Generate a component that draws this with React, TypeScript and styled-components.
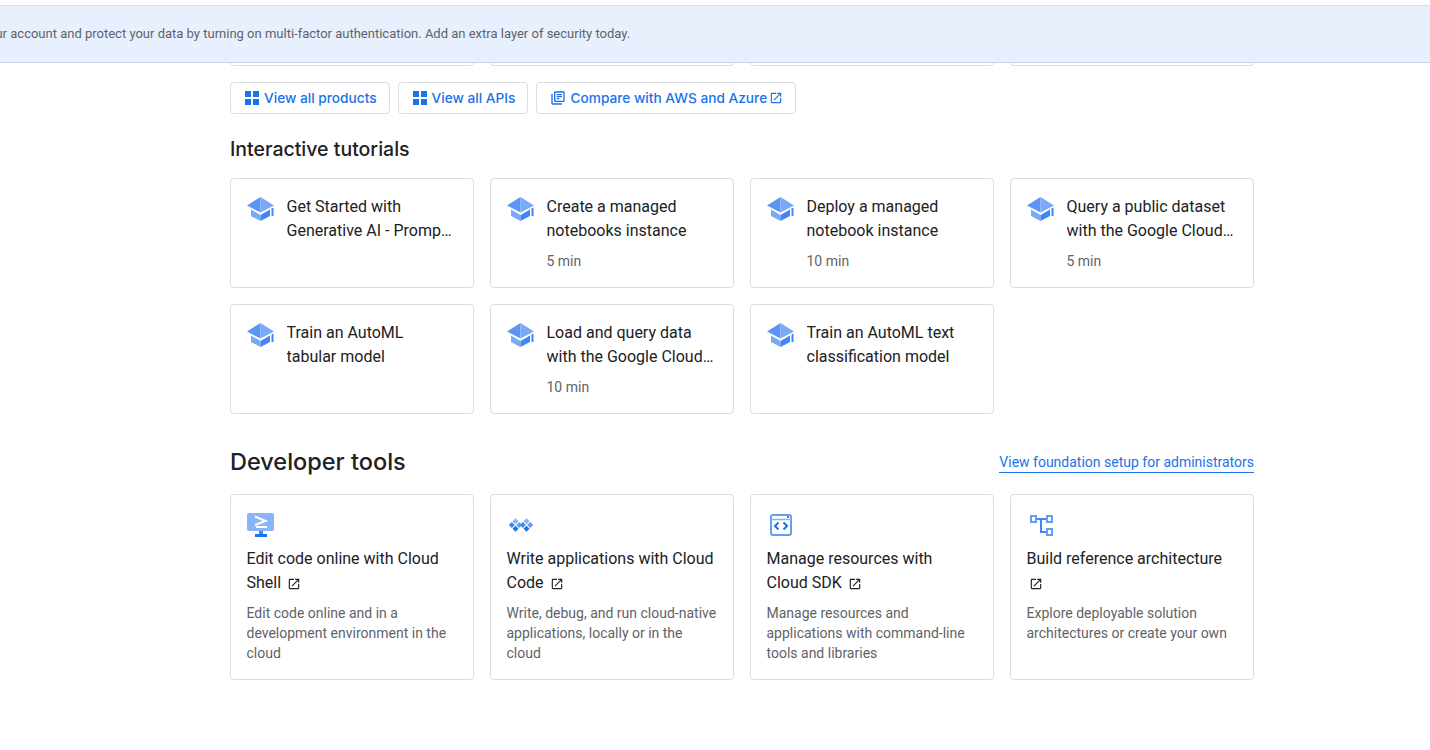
import styled, { createGlobalStyle } from 'styled-components'

const GlobalStyle = createGlobalStyle`
  html, body {
    margin: 0;
    padding: 0;
    background: #fff;
    font-family: Roboto, "Liberation Sans", sans-serif;
    color: #202124;
  }
`

const Page = styled.div`
  position: relative;
  height: 750px;
  overflow: hidden;
`

const Banner = styled.div`
  position: absolute;
  top: 5px;
  left: 0;
  right: 0;
  height: 58px;
  box-sizing: border-box;
  display: flex;
  align-items: center;
  background: #e8f0fe;
  border-top: 1px solid #dadce0;
  border-bottom: 1px solid #c9d3e6;
  overflow: hidden;
`

const BannerText = styled.span`
  margin-left: -61px;
  font-size: 13px;
  line-height: 16px;
  white-space: nowrap;
  color: #5f6368;
`

const Content = styled.main`
  width: 1024px;
  margin-left: 230px;
`

const PeekRow = styled.div`
  display: grid;
  grid-template-columns: repeat(4, 244px);
  gap: 16px;
  height: 56px;
  padding-top: 10px;
`

const PeekCard = styled.div`
  border: 1px solid #dadce0;
  border-radius: 4px;
`

const Buttons = styled.div`
  display: flex;
  gap: 8px;
  margin-top: 16px;
`

const LinkButton = styled.a`
  display: flex;
  align-items: center;
  height: 32px;
  box-sizing: border-box;
  padding: 0 12px 0 13px;
  gap: 4px;
  border: 1px solid #dadce0;
  border-radius: 4px;
  font-family: Inter, Roboto, sans-serif;
  font-size: 13.7px;
  font-weight: 500;
  color: #1a73e8;
  white-space: nowrap;
`

const SectionTitle = styled.h2`
  margin: 21px 0 15px;
  font-family: Inter, Roboto, sans-serif;
  font-size: 19.5px;
  line-height: 28px;
  font-weight: 500;
  color: #202124;
`

const SectionHead = styled.div`
  display: flex;
  align-items: center;
  justify-content: space-between;
  margin: 32px 0 16px;
`

const BigTitle = styled.h2`
  margin: 0;
  font-family: Inter, Roboto, sans-serif;
  font-size: 23.5px;
  line-height: 32px;
  font-weight: 500;
  color: #202124;
`

const TextLink = styled.a`
  font-size: 14px;
  line-height: 20px;
  color: #1a73e8;
  border-bottom: 1px solid #1a73e8;
`

const Grid = styled.div`
  display: grid;
  grid-template-columns: repeat(4, 244px);
  gap: 16px;
`

const TutorialCard = styled.div`
  display: flex;
  gap: 12.5px;
  height: 110px;
  box-sizing: border-box;
  padding: 16px 17px 16px 15.5px;
  border: 1px solid #dadce0;
  border-radius: 4px;
`

const TutorialBody = styled.div`
  min-width: 0;
`

const CardTitle = styled.div`
  font-size: 16px;
  line-height: 24px;
  color: #202124;
`

const ClampTitle = styled(CardTitle)`
  display: -webkit-box;
  -webkit-box-orient: vertical;
  -webkit-line-clamp: 2;
  overflow: hidden;
`

const Duration = styled.div`
  margin-top: 8px;
  font-size: 14px;
  line-height: 20px;
  color: #5f6368;
`

const ToolCard = styled.div`
  height: 186px;
  box-sizing: border-box;
  padding: 16px 16px 16px 15.5px;
  border: 1px solid #dadce0;
  border-radius: 4px;
`

const ToolIcon = styled.div`
  height: 28px;
  margin: 0 0 8px -0.5px;
`

const Description = styled.div`
  margin-top: 8px;
  font-size: 14px;
  line-height: 20px;
  color: #5f6368;
`

const External = styled.svg`
  display: inline-block;
  width: 14px;
  height: 14px;
  margin-left: 2px;
  vertical-align: -3px;
  fill: #202124;
`

const SmallExternal = styled.svg`
  width: 14px;
  height: 14px;
  fill: #1a73e8;
  margin-left: -2px;
`

const GridIcon = styled.svg`
  width: 16px;
  height: 16px;
  fill: #1a73e8;
`

const HatIcon = styled.svg`
  flex: none;
  width: 28px;
  height: 28px;
  margin-left: -0.5px;
`

const openPath =
  'M19 19H5V5h7V3H5c-1.11 0-2 .9-2 2v14c0 1.1.89 2 2 2h14c1.1 0 2-.9 2-2v-7h-2v7zM14 3v2h3.59l-9.83 9.83 1.41 1.41L19 6.41V10h2V3h-7z'

function Apps() {
  return (
    <GridIcon viewBox="0 0 16 16">
      <rect x="1" y="1" width="6" height="6" />
      <rect x="9" y="1" width="6" height="6" />
      <rect x="1" y="9" width="6" height="6" />
      <rect x="9" y="9" width="6" height="6" />
    </GridIcon>
  )
}

function Library() {
  return (
    <GridIcon viewBox="0 0 24 24">
      <path d="M4 6H2v14c0 1.1.9 2 2 2h14v-2H4V6zm16-4H8c-1.1 0-2 .9-2 2v12c0 1.1.9 2 2 2h12c1.1 0 2-.9 2-2V4c0-1.1-.9-2-2-2zm0 14H8V4h12v12zM10 9h8v2h-8zm0 3h4v2h-4zm0-6h8v2h-8z" />
    </GridIcon>
  )
}

function Hat() {
  return (
    <HatIcon viewBox="0 0 28 28">
      <path d="M14.5 2 1 10.5l13.5 7z" fill="#5b95f5" />
      <path d="M14.5 2 28 10.5l-13.5 7z" fill="#7aa9f7" />
      <path d="M5 14.5v6.5l9.5 5v-6z" fill="#7aa9f7" />
      <path d="M24 14.5v6.5l-9.5 5v-6z" fill="#4285f4" />
      <path d="M25.5 13.5l2-1V21h-2z" fill="#4285f4" />
    </HatIcon>
  )
}

function ShellIcon() {
  return (
    <svg width="28" height="28" viewBox="0 0 28 28" fill="none">
      <rect x="1" y="2" width="27" height="18" rx="2" fill="#8ab4f8" />
      <path d="M9 5.5 19.5 10 9 14" stroke="#fff" strokeWidth="2" />
      <rect x="10" y="15" width="11" height="2" fill="#fff" />
      <rect x="13" y="20" width="4" height="3" fill="#4285f4" />
      <rect x="9" y="23" width="12" height="3" fill="#1a73e8" />
    </svg>
  )
}

function CodeCluster({ x }: { x: number }) {
  const r = 3
  const d = 3.7
  const diamond = (cx: number, cy: number, fill: string) => (
    <path d={`M${cx} ${cy - r}l${r} ${r}-${r} ${r}-${r}-${r}z`} fill={fill} />
  )
  return (
    <>
      {diamond(x, 14 - d, '#8ab4f8')}
      {diamond(x - d, 14, '#4285f4')}
      {diamond(x + d, 14, '#669df6')}
      {diamond(x, 14 + d, '#1a73e8')}
    </>
  )
}

function CodeIcon() {
  return (
    <svg width="28" height="28" viewBox="0 0 28 28">
      <CodeCluster x={9.5} />
      <CodeCluster x={20.5} />
    </svg>
  )
}

function SdkIcon() {
  return (
    <svg width="28" height="28" viewBox="0 0 28 28" fill="none">
      <rect x="5" y="4" width="20" height="20" rx="2" stroke="#669df6" strokeWidth="2" />
      <path d="M5 8.5h20" stroke="#8ab4f8" strokeWidth="1.5" />
      <rect x="21" y="5" width="2" height="2" fill="#4285f4" />
      <path d="M12.5 11.5 9 15l3.5 3.5M17.5 11.5 21 15l-3.5 3.5" stroke="#1a73e8" strokeWidth="2" />
    </svg>
  )
}

function ArchIcon() {
  return (
    <svg width="28" height="28" viewBox="0 0 28 28" fill="none">
      <path d="M11 8h9M15 8v13h5" stroke="#4285f4" strokeWidth="2" />
      <rect x="5" y="5" width="5" height="6" stroke="#669df6" strokeWidth="2" />
      <rect x="21" y="5" width="5" height="6" stroke="#669df6" strokeWidth="2" />
      <rect x="21" y="18" width="5" height="6" stroke="#669df6" strokeWidth="2" />
    </svg>
  )
}

const tutorials = [
  { title: 'Get Started with Generative AI - Prompt Design' },
  { title: 'Create a managed notebooks instance', time: '5 min' },
  { title: 'Deploy a managed notebook instance', time: '10 min' },
  { title: 'Query a public dataset with the Google Cloud console', time: '5 min' },
  { title: 'Train an AutoML tabular model' },
  { title: 'Load and query data with the Google Cloud console', time: '10 min' },
  { title: 'Train an AutoML text classification model' },
]

const tools = [
  {
    icon: <ShellIcon />,
    title: 'Edit code online with Cloud Shell',
    text: 'Edit code online and in a development environment in the cloud',
  },
  {
    icon: <CodeIcon />,
    title: 'Write applications with Cloud Code',
    text: 'Write, debug, and run cloud-native applications, locally or in the cloud',
  },
  {
    icon: <SdkIcon />,
    title: 'Manage resources with Cloud SDK',
    text: 'Manage resources and applications with command-line tools and libraries',
  },
  {
    icon: <ArchIcon />,
    title: 'Build reference architecture',
    text: 'Explore deployable solution architectures or create your own',
  },
]

export default function App() {
  return (
    <Page>
      <GlobalStyle />
      <Content>
        <PeekRow>
          <PeekCard />
          <PeekCard />
          <PeekCard />
          <PeekCard />
        </PeekRow>
        <Buttons>
          <LinkButton>
            <Apps />
            View all products
          </LinkButton>
          <LinkButton>
            <Apps />
            View all APIs
          </LinkButton>
          <LinkButton>
            <Library />
            Compare with AWS and Azure
            <SmallExternal viewBox="0 0 24 24">
              <path d={openPath} />
            </SmallExternal>
          </LinkButton>
        </Buttons>
        <SectionTitle>Interactive tutorials</SectionTitle>
        <Grid>
          {tutorials.map((t) => (
            <TutorialCard key={t.title}>
              <Hat />
              <TutorialBody>
                <ClampTitle>{t.title}</ClampTitle>
                {t.time && <Duration>{t.time}</Duration>}
              </TutorialBody>
            </TutorialCard>
          ))}
        </Grid>
        <SectionHead>
          <BigTitle>Developer tools</BigTitle>
          <TextLink>View foundation setup for administrators</TextLink>
        </SectionHead>
        <Grid>
          {tools.map((t) => (
            <ToolCard key={t.title}>
              <ToolIcon>{t.icon}</ToolIcon>
              <CardTitle>
                {t.title}{' '}
                <External viewBox="0 0 24 24">
                  <path d={openPath} />
                </External>
              </CardTitle>
              <Description>{t.text}</Description>
            </ToolCard>
          ))}
        </Grid>
      </Content>
      <Banner>
        <BannerText>
          Secure your account and protect your data by turning on multi-factor authentication. Add an
          extra layer of security today.
        </BannerText>
      </Banner>
    </Page>
  )
}
